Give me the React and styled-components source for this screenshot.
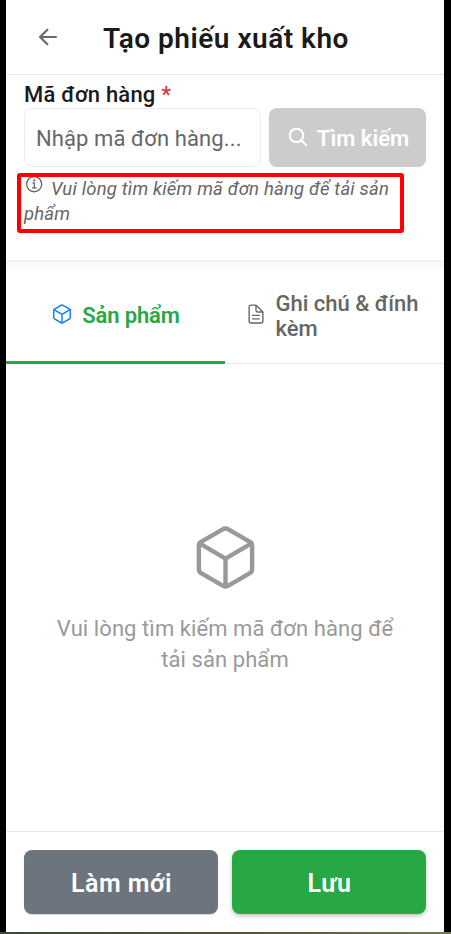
import React from 'react';
import styled, { createGlobalStyle } from 'styled-components';
import {
    IoArrowBackOutline,
    IoCubeOutline,
    IoDocumentTextOutline,
    IoInformationCircleOutline,
    IoSearchOutline,
} from 'react-icons/io5';

function App() {
    return (
        <>
            <GlobalStyle />
            <Frame>
                <Screen>
                    <Header>
                        <BackButton aria-label="Quay lại"><IoArrowBackOutline /></BackButton>
                        <Title>Tạo phiếu xuất kho</Title>
                    </Header>
                    <SearchSection>
                        <Label htmlFor="order">Mã đơn hàng <Required>*</Required></Label>
                        <SearchRow>
                            <OrderInput id="order" placeholder="Nhập mã đơn hàng..." />
                            <SearchButton disabled><IoSearchOutline /><span>Tìm kiếm</span></SearchButton>
                        </SearchRow>
                        <Hint>
                            <IoInformationCircleOutline />
                            <span>Vui lòng tìm kiếm mã đơn hàng để tải sản<br />phẩm</span>
                            <HintMark />
                        </Hint>
                    </SearchSection>
                    <Divider />
                    <Tabs>
                        <Tab $active><IoCubeOutline /><TabText $active>Sản phẩm</TabText></Tab>
                        <Tab><IoDocumentTextOutline /><TabText>Ghi chú &amp; đính<br />kèm</TabText></Tab>
                    </Tabs>
                    <Empty>
                        <IoCubeOutline />
                        <EmptyText>Vui lòng tìm kiếm mã đơn hàng để<br />tải sản phẩm</EmptyText>
                    </Empty>
                    <Footer>
                        <FooterButton>Làm mới</FooterButton>
                        <FooterButton $primary>Lưu</FooterButton>
                    </Footer>
                </Screen>
                <BottomEdge />
            </Frame>
        </>
    );
}

const GlobalStyle = createGlobalStyle`
    * {box-sizing:border-box;}
    body {
        margin:0;
        background:#000;
        font-family:Roboto, "Noto Sans", sans-serif;
    }
    button, input {font-family:inherit;}
    svg {flex-shrink:0;}
`;
const Frame = styled.div`
    width:451px;
    height:934px;
    display:flex;
    flex-direction:column;
    overflow:hidden;
`;
const Screen = styled.div`
    width:438px;
    height:932px;
    margin-left:6px;
    background:#fff;
    display:flex;
    flex-direction:column;
`;
const Header = styled.header`
    height:75px;
    padding:0 18px 0 29px;
    display:flex;
    align-items:center;
    border-bottom:1px solid #e5e6e7;
`;
const BackButton = styled.button`
    width:26px;
    height:26px;
    padding:0;
    border:0;
    background:none;
    color:#6a6a6a;

    svg {
        display:block;
        width:26px;
        height:26px;
    }
    path {stroke-width:44px;}
`;
const Title = styled.h1`
    margin:3px 0 0 42px;
    font-size:28px;
    font-weight:600;
    line-height:34px;
    letter-spacing:0.5px;
    color:#1a1a1a;
    white-space:nowrap;
`;
const SearchSection = styled.section`
    height:185px;
    padding:5px 18px 0;
`;
const Label = styled.label`
    display:block;
    height:28px;
    font-size:22px;
    font-weight:500;
    line-height:30px;
    letter-spacing:0.2px;
    color:#1a1a1a;
`;
const Required = styled.span`
    color:#dc3545;
`;
const SearchRow = styled.div`
    display:flex;
    gap:8px;
    height:59px;
`;
const OrderInput = styled.input`
    width:237px;
    padding:2px 11px 0;
    border:1px solid #e9ecef;
    border-radius:8px;
    background:#fff;
    font-size:22px;
    letter-spacing:0.1px;
    outline:none;

    &::placeholder {color:#666; opacity:1;}
`;
const SearchButton = styled.button`
    flex:1;
    display:flex;
    align-items:center;
    justify-content:center;
    gap:8px;
    padding:0 0 0 1px;
    border:0;
    border-radius:8px;
    background:#ccc;
    color:#fff;
    font-size:22px;
    font-weight:600;

    svg {width:22px; height:22px; margin-top:-2px;}
    path {stroke-width:48px;}
    span {padding-top:2px;}
`;
const Hint = styled.p`
    position:relative;
    margin:10px 0 0;
    font-size:18.5px;
    font-style:italic;
    line-height:25px;
    letter-spacing:0.18px;
    color:#666;
    white-space:nowrap;

    svg {
        width:21px;
        height:21px;
        margin:-4px 6px 0 0;
        vertical-align:0;
    }
`;
const HintMark = styled.span`
    position:absolute;
    top:-4px;
    left:-7px;
    width:387px;
    height:60px;
    border:4px solid #f00;
    border-radius:3px;
`;
const Divider = styled.div`
    height:9px;
    border-top:2px solid #f0f2f2;
    background:#f8f9f9;
`;
const Tabs = styled.nav`
    display:flex;
    height:95px;
    border-bottom:1px solid #e5e8e9;
`;
const Tab = styled.button`
    width:219px;
    height:95px;
    padding:${props => props.$active ? '0 0 2px' : '0 5px 2px 0'};
    display:flex;
    align-items:center;
    justify-content:center;
    gap:${props => props.$active ? 9 : 8}px;
    border:0;
    border-bottom:3px solid ${props => props.$active ? '#28a745' : 'transparent'};
    background:none;
    color:${props => props.$active ? '#007bff' : '#666'};

    svg {width:22px; height:22px;}
`;
const TabText = styled.span`
    padding-top:3px;
    font-size:22px;
    font-weight:${props => props.$active ? 600 : 500};
    line-height:25px;
    letter-spacing:${props => props.$active ? -0.15 : 0}px;
    text-align:left;
    white-space:nowrap;
    color:${props => props.$active ? '#28a745' : '#666'};
`;
const Empty = styled.main`
    flex:1;
    padding-top:158px;
    display:flex;
    flex-direction:column;
    align-items:center;
    color:#999;

    svg {width:71px; height:71px;}
`;
const EmptyText = styled.p`
    margin:20px 0 0;
    font-size:22px;
    line-height:31px;
    letter-spacing:0.08px;
    text-align:center;
    white-space:nowrap;
`;
const Footer = styled.footer`
    height:101px;
    padding:18px 18px 0;
    display:flex;
    gap:14px;
    border-top:1px solid #e8e8e8;
`;
const FooterButton = styled.button`
    flex:1;
    height:64px;
    padding:3px 0 0 1px;
    border:0;
    border-radius:8px;
    background:${props => props.$primary ? '#28a745' : '#6c757d'};
    box-shadow:${props => props.$primary ? '0 2px 4px rgba(0,0,0,0.25)' : '0 1px 1px rgba(108,117,125,0.3)'};
    color:#fff;
    font-size:25px;
    font-weight:600;
    letter-spacing:0.5px;
`;
const BottomEdge = styled.div`
    height:2px;
    background:linear-gradient(90deg, #3f4835, #505039 50%, #77764a);
`;

export default App;
